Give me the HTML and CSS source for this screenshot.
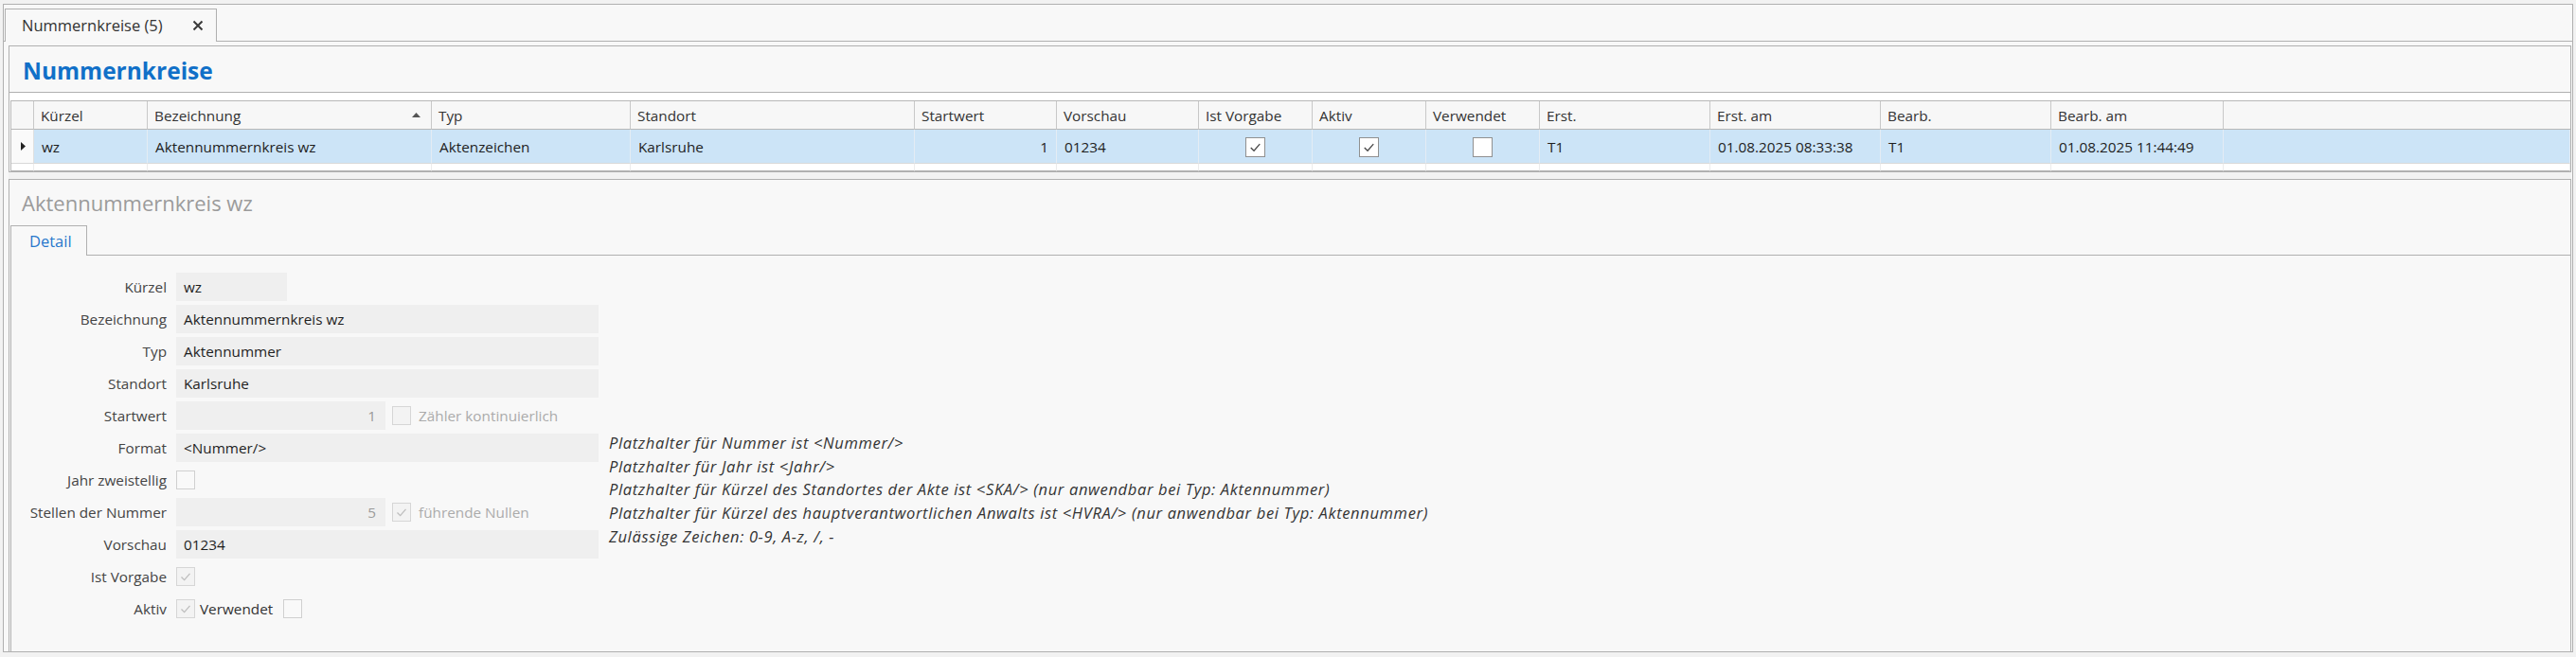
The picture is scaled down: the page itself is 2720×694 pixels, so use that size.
FILE: index.html
```html
<!DOCTYPE html>
<html lang="de">
<head>
  <meta charset="UTF-8" />
  <title>Nummernkreise</title>
  <link rel="stylesheet" href="styles.css">
</head>
<body>
<div class="window">
  <div class="tabstrip">
    <div class="doc-tab">
      <span>Nummernkreise (5)</span>
      <svg class="close" viewBox="0 0 12 12"><path d="M1.5 1.5l9 9M10.5 1.5l-9 9"/></svg>
    </div>
  </div>

  <div class="doc">
    <header class="page-head">
      <h1>Nummernkreise</h1>
    </header>

    <section class="grid-panel">
      <div class="grid-strip"></div>
      <table class="grid">
        <thead>
          <tr>
            <th class="ind"></th>
            <th class="w120">Kürzel</th>
            <th class="w300"><div class="th-sort"><span>Bezeichnung</span><svg viewBox="0 0 9 5"><path d="M0 5L4.5 0L9 5Z"/></svg></div></th>
            <th class="w210">Typ</th>
            <th class="w300">Standort</th>
            <th class="w150">Startwert</th>
            <th class="w150">Vorschau</th>
            <th class="w120">Ist Vorgabe</th>
            <th class="w120">Aktiv</th>
            <th class="w120">Verwendet</th>
            <th class="w180">Erst.</th>
            <th class="w180">Erst. am</th>
            <th class="w180">Bearb.</th>
            <th class="w182">Bearb. am</th>
            <th class="fill"></th>
          </tr>
        </thead>
        <tbody>
          <tr class="selected">
            <td class="ind"><svg viewBox="0 0 5 9"><path d="M0 0L5 4.5L0 9Z"/></svg></td>
            <td>wz</td>
            <td>Aktennummernkreis wz</td>
            <td>Aktenzeichen</td>
            <td>Karlsruhe</td>
            <td class="num">1</td>
            <td>01234</td>
            <td class="center"><span class="cb"><svg viewBox="0 0 20 20"><path d="M5 10.5l3.5 3.5L15 6.5"/></svg></span></td>
            <td class="center"><span class="cb"><svg viewBox="0 0 20 20"><path d="M5 10.5l3.5 3.5L15 6.5"/></svg></span></td>
            <td class="center"><span class="cb"></span></td>
            <td>T1</td>
            <td>01.08.2025 08:33:38</td>
            <td>T1</td>
            <td>01.08.2025 11:44:49</td>
            <td></td>
          </tr>
          <tr class="spacer">
            <td class="ind"></td><td></td><td></td><td></td><td></td><td></td><td></td><td></td>
            <td></td><td></td><td></td><td></td><td></td><td></td><td></td>
          </tr>
        </tbody>
      </table>
    </section>

    <div class="splitter"></div>

    <section class="detail">
      <h2>Aktennummernkreis wz</h2>
      <div class="detail-tabs">
        <span class="detail-tab">Detail</span>
      </div>
      <div class="detail-body">
        <div class="form">
          <label>Kürzel</label>
          <div class="field"><span class="input short">wz</span></div>

          <label>Bezeichnung</label>
          <div class="field"><span class="input">Aktennummernkreis wz</span></div>

          <label>Typ</label>
          <div class="field"><span class="input">Aktennummer</span></div>

          <label>Standort</label>
          <div class="field"><span class="input">Karlsruhe</span></div>

          <label>Startwert</label>
          <div class="field">
            <span class="input mid disabled">1</span>
            <span class="cb off"></span>
            <span class="muted">Zähler kontinuierlich</span>
          </div>

          <label>Format</label>
          <div class="field"><span class="input">&lt;Nummer/&gt;</span></div>

          <label>Jahr zweistellig</label>
          <div class="field"><span class="cb plain"></span></div>

          <label>Stellen der Nummer</label>
          <div class="field">
            <span class="input mid disabled">5</span>
            <span class="cb off"><svg viewBox="0 0 20 20"><path d="M5 10.5l3.5 3.5L15 6.5"/></svg></span>
            <span class="muted">führende Nullen</span>
          </div>

          <label>Vorschau</label>
          <div class="field"><span class="input">01234</span></div>

          <label>Ist Vorgabe</label>
          <div class="field"><span class="cb off"><svg viewBox="0 0 20 20"><path d="M5 10.5l3.5 3.5L15 6.5"/></svg></span></div>

          <label>Aktiv</label>
          <div class="field">
            <span class="cb off"><svg viewBox="0 0 20 20"><path d="M5 10.5l3.5 3.5L15 6.5"/></svg></span>
            <span class="inline-label">Verwendet</span>
            <span class="cb plain"></span>
          </div>

          <div class="hints">
            <p>Platzhalter für Nummer ist &lt;Nummer/&gt;</p>
            <p>Platzhalter für Jahr ist &lt;Jahr/&gt;</p>
            <p>Platzhalter für Kürzel des Standortes der Akte ist &lt;SKA/&gt; (nur anwendbar bei Typ: Aktennummer)</p>
            <p>Platzhalter für Kürzel des hauptverantwortlichen Anwalts ist &lt;HVRA/&gt; (nur anwendbar bei Typ: Aktennummer)</p>
            <p>Zulässige Zeichen: 0-9, A-z, /, -</p>
          </div>
        </div>
      </div>
    </section>
  </div>
</div>
</body>
</html>
```

FILE: styles.css
```css
* {
  box-sizing: border-box;
}
html, body {
  margin: 0;
  padding: 0;
}
body {
  background: #f2f2f2;
  font-family: 'Open Sans', 'Noto Sans', sans-serif;
  font-size: 15.3px;
  color: #222;
}

/* outer window */
.window {
  margin: 4px 3px 0 3px;
  height: 685px;
  border: 1px solid #b0b0b0;
  background: #f8f8f8;
  display: flex;
  flex-direction: column;
}
.tabstrip {
  display: flex;
  padding: 4px 0 0 1px;
}
.doc-tab {
  position: relative;
  z-index: 1;
  width: 224px;
  height: 35px;
  margin-bottom: -1px;
  padding: 0 0 1px 17px;
  border: 1px solid #b0b0b0;
  border-bottom: none;
  background: #f8f8f8;
  display: flex;
  align-items: center;
  gap: 31px;
  font-size: 16.5px;
  color: #333;
}
.doc-tab .close {
  width: 12px;
  height: 12px;
  fill: none;
  stroke: #3a3a3a;
  stroke-width: 2;
}
.doc {
  flex: 1;
  border-top: 1px solid #b0b0b0;
  padding: 4px 1px 0 5px;
  display: flex;
  flex-direction: column;
}

/* page header */
.page-head {
  height: 50px;
  border: 1px solid #b0b0b0;
  padding: 2px 0 0 14px;
  display: flex;
  align-items: center;
}
.page-head h1 {
  margin: 0;
  font-size: 24.5px;
  font-weight: 700;
  color: #1170c8;
}

/* list */
.grid-panel {
  border: 1px solid #b0b0b0;
  border-top: none;
  padding-left: 1px;
  background: #fff;
}
.grid-strip {
  height: 8px;
}
.grid {
  width: 100%;
  table-layout: fixed;
  border-collapse: separate;
  border-spacing: 0;
  border-top: 1px solid #b8b8b8;
  border-left: 1px solid #b8b8b8;
}
.grid th {
  height: 30px;
  padding: 0 7px;
  background: #f7f7f7;
  border-right: 1px solid #c8c8c8;
  border-bottom: 1px solid #b8b8b8;
  text-align: left;
  font-weight: 400;
  color: #333;
  white-space: nowrap;
}
.grid th.fill {
  border-right: none;
}
.grid .ind { width: 24px; padding: 0 0 0 10px; }
.grid .w120 { width: 120px; }
.grid .w150 { width: 150px; }
.grid .w180 { width: 180px; }
.grid .w182 { width: 182px; }
.grid .w210 { width: 210px; }
.grid .w300 { width: 300px; }
.th-sort {
  display: flex;
  justify-content: space-between;
  align-items: center;
  padding-right: 4px;
}
.th-sort svg {
  width: 9px;
  height: 5px;
  fill: #555;
}
.grid td {
  height: 36px;
  padding: 0 8px;
  border-right: 1px solid #e4ecf4;
  border-bottom: 1px solid #d8d8d8;
  white-space: nowrap;
  color: #1e1e1e;
}
.grid tr.selected td {
  background: #cce4f7;
}
.grid tr.selected td.ind {
  background: #fafafa;
  border-right-color: #e0e0e0;
  padding-left: 10px;
}
.grid td.ind svg {
  display: block;
  width: 5px;
  height: 9px;
  fill: #222;
}
.grid td.num {
  text-align: right;
}
.grid td.center {
  text-align: center;
}
.grid tr.spacer td {
  height: 8px;
  background: #fff;
  border-right-color: #ececec;
  border-bottom-color: #b0b0b0;
}

/* check boxes */
.cb {
  display: inline-block;
  vertical-align: middle;
  width: 21px;
  height: 21px;
  border: 1px solid #909090;
  background: #fff;
}
.cb svg {
  display: block;
  width: 100%;
  height: 100%;
  fill: none;
  stroke: #4a4a4a;
  stroke-width: 1.4;
}
.cb.off {
  width: 20px;
  height: 20px;
  border-color: #d6d6d6;
  background: #f3f3f3;
}
.cb.off svg {
  stroke: #bdbdbd;
}
.cb.plain {
  width: 20px;
  height: 20px;
  border-color: #d0d0d0;
  background: #f9f9f9;
}

.splitter {
  height: 7px;
  background: #f2f2f2;
}

/* detail panel */
.detail {
  flex: 1;
  border: 1px solid #b0b0b0;
  border-bottom: none;
  display: flex;
  flex-direction: column;
}
.detail h2 {
  height: 48px;
  margin: 0;
  padding: 0 0 0 13px;
  display: flex;
  align-items: center;
  font-size: 22px;
  font-weight: 400;
  color: #9b9b9b;
}
.detail-tabs {
  display: flex;
  padding-left: 1px;
}
.detail-tab {
  width: 81px;
  height: 32px;
  margin-bottom: -1px;
  padding: 0 0 1px 19px;
  border: 1px solid #b0b0b0;
  border-bottom: none;
  background: #f8f8f8;
  display: flex;
  align-items: center;
  font-size: 16.5px;
  color: #2878cc;
  position: relative;
  z-index: 1;
}
.detail-body {
  flex: 1;
  margin-left: 1px;
  border-top: 1px solid #b0b0b0;
  border-left: 1px solid #b0b0b0;
  padding-top: 18px;
}

/* form */
.form {
  display: grid;
  grid-template-columns: 164px 446px 1fr;
  grid-auto-rows: 30px;
  column-gap: 10px;
  row-gap: 4px;
}
.form label {
  grid-column: 1;
  align-self: center;
  text-align: right;
  color: #444;
}
.field {
  grid-column: 2;
  display: flex;
  align-items: center;
}
.input {
  width: 100%;
  height: 30px;
  padding: 0 8px;
  background: #efefef;
  display: flex;
  align-items: center;
  color: #1e1e1e;
}
.input.short {
  width: 117px;
}
.input.mid {
  width: 221px;
  justify-content: flex-end;
  padding-right: 10px;
}
.input.disabled {
  color: #9a9a9a;
}
.field .cb + .muted {
  margin-left: 8px;
}
.input + .cb {
  margin-left: 7px;
}
.muted {
  color: #ababab;
}
.inline-label {
  margin: 0 11px 0 5px;
  color: #333;
}

/* placeholder help next to the format field */
.hints {
  grid-column: 3;
  grid-row: 6 / span 5;
  margin: -2px 0 0 1px;
  font-size: 16.5px;
  font-style: italic;
  letter-spacing: 0.65px;
  color: #333;
}
.hints p {
  margin: 0;
  line-height: 24.7px;
  white-space: nowrap;
}
```
